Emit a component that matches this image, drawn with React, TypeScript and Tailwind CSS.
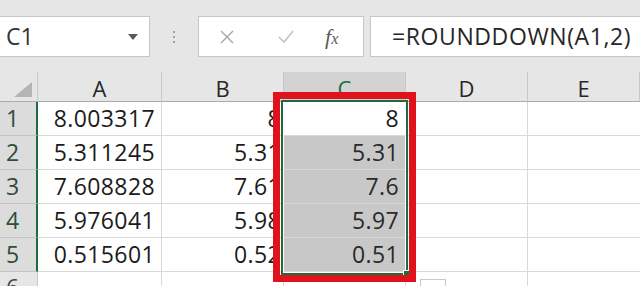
import type React from "react";

const cols = ["A", "B", "C", "D", "E"];
const colWidths = ["w-[124px]", "w-[122px]", "w-[122px]", "w-[122px]", "w-[112px]"];

const rows = [
  ["8.003317", "8", "8"],
  ["5.311245", "5.31", "5.31"],
  ["7.608828", "7.61", "7.6"],
  ["5.976041", "5.98", "5.97"],
  ["0.515601", "0.52", "0.51"],
];

const HeaderCell: React.FC<{ label: string; idx: number }> = ({ label, idx }) => (
  <div
    className={`${colWidths[idx]} shrink-0 flex items-end justify-center pb-[2px] border-r border-[#c8c8c8] border-b border-b-[#ababab] ${
      label === "C" ? "bg-[#d3d3d3] text-[#1e6b41]" : "bg-[#e6e6e6] text-[#262626]"
    }`}
  >
    {label}
  </div>
);

export default function App() {
  return (
    <div
      className="relative w-[640px] h-[286px] overflow-hidden bg-[#e6e6e6] text-[#1b1b1b]"
      style={{ fontFamily: '"Open Sans", "Noto Sans", sans-serif' }}
    >
      {/* Formula bar */}
      <div className="h-[72px] flex items-start pt-[16px]">
        <div className="w-[150px] h-[41px] bg-white border border-[#c6c6c6] border-l-0 flex items-center justify-between pl-[6px] pr-[10px]">
          <span className="text-[23px] text-[#333]">C1</span>
          <svg width="12" height="8" viewBox="0 0 12 8">
            <path d="M1 1 L11 1 L6 7 Z" fill="#5a5a5a" />
          </svg>
        </div>
        <div className="w-[48px] h-[41px] flex flex-col items-center justify-center gap-[3px]">
          <span className="w-[2px] h-[2px] rounded-full bg-[#8a8a8a]" />
          <span className="w-[2px] h-[2px] rounded-full bg-[#8a8a8a]" />
          <span className="w-[2px] h-[2px] rounded-full bg-[#8a8a8a]" />
        </div>
        <div className="w-[166px] h-[41px] bg-white border border-[#c6c6c6] flex items-center">
          <svg className="ml-[20px]" width="16" height="16" viewBox="0 0 16 16">
            <path d="M2 2 L14 14 M14 2 L2 14" stroke="#a6a6a6" strokeWidth="1.4" />
          </svg>
          <svg className="ml-[42px]" width="18" height="16" viewBox="0 0 18 16">
            <path d="M2 8 L7 13 L16 2" stroke="#c3c3c3" strokeWidth="1.6" fill="none" />
          </svg>
          <span
            className="ml-[30px] text-[22px] italic text-[#5a5a5a] leading-none"
            style={{ fontFamily: '"Liberation Serif", serif' }}
          >
            f<span className="text-[16px]">x</span>
          </span>
        </div>
        <div className="ml-[6px] flex-1 h-[41px] bg-white border border-[#c6c6c6] border-r-0 flex items-center pl-[21px]">
          <span className="text-[23px] text-[#262626] tracking-[0.6px]">=ROUNDDOWN(A1,2)</span>
        </div>
      </div>

      {/* Grid */}
      <div className="bg-white">
        <div className="flex h-[30px] text-[22px] leading-none">
          <div className="w-[38px] shrink-0 bg-[#e6e6e6] border-r border-[#c8c8c8] border-b border-b-[#ababab] flex items-end justify-end pr-[5px] pb-[4px]">
            <svg width="18" height="15" viewBox="0 0 18 15">
              <path d="M18 0 L18 15 L0 15 Z" fill="#b4b4b4" />
            </svg>
          </div>
          {cols.map((c, i) => (
            <HeaderCell key={c} label={c} idx={i} />
          ))}
        </div>
        {rows.map((r, ri) => (
          <div key={ri} className="flex h-[34px] text-[23px] tracking-[0.4px]">
            <div className="w-[38px] shrink-0 bg-[#dcdcdc] border-b border-[#c3c3c3] border-r-2 border-r-[#1e6b41] flex items-center pl-[6px] text-[#2d4d3b]">
              {ri + 1}
            </div>
            <div className="w-[124px] shrink-0 border-r border-b border-[#d9d9d9] flex items-center justify-end pr-[6px]">
              {r[0]}
            </div>
            <div className="w-[122px] shrink-0 border-r border-b border-[#d9d9d9] flex items-center justify-end pr-[2px]">
              {r[1]}
            </div>
            <div
              className={`w-[122px] shrink-0 border-r border-b border-[#d9d9d9] flex items-center justify-end pr-[6px] ${
                ri === 0 ? "bg-white" : "bg-[#c8c8c8] text-[#2a2a2a]"
              }`}
            >
              {r[2]}
            </div>
            <div className="w-[122px] shrink-0 border-r border-b border-[#d9d9d9]" />
            <div className="w-[112px] shrink-0 border-b border-[#d9d9d9]" />
          </div>
        ))}
        <div className="flex h-[20px] text-[23px]">
          <div className="w-[38px] shrink-0 bg-[#e6e6e6] border-r border-[#c8c8c8] pl-[6px] text-[#444] leading-[30px]">6</div>
          <div className="w-[124px] shrink-0 border-r border-[#d9d9d9]" />
          <div className="w-[122px] shrink-0 border-r border-[#d9d9d9]" />
          <div className="w-[122px] shrink-0 border-r border-[#d9d9d9]" />
          <div className="w-[122px] shrink-0 border-r border-[#d9d9d9]" />
          <div className="w-[112px] shrink-0" />
        </div>
      </div>

      {/* Selection border */}
      <div className="absolute left-[281px] top-[100px] w-[127px] h-[175px] border-2 border-[#1e6b41] pointer-events-none">
        <div className="absolute inset-0 border border-white" />
        <div className="absolute right-[-5px] bottom-[-5px] w-[8px] h-[8px] bg-[#1e6b41] border border-white" />
      </div>

      {/* Quick analysis button */}
      <div className="absolute left-[420px] top-[279px] w-[26px] h-[14px] bg-white border border-[#c8c8c8]" />

      {/* Red annotation box */}
      <div className="absolute left-[273px] top-[92px] w-[143px] h-[190px] border-[7px] border-[#e0131c] pointer-events-none" />
    </div>
  );
}
